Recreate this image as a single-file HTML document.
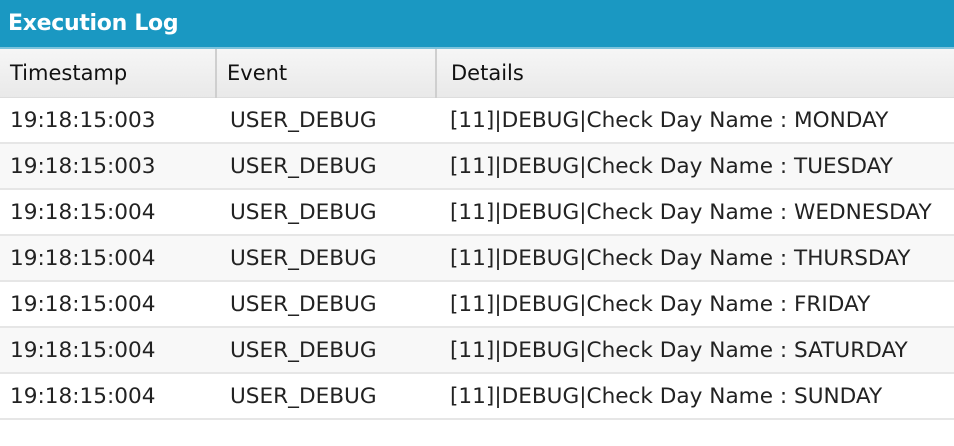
<!DOCTYPE html>
<html><head><style>
body{margin:0;width:954px;height:446px;background:#fff;font-family:"DejaVu Sans","Liberation Sans",sans-serif;overflow:hidden}
.title{height:47px;background:#1a98c2;color:#fff;font-weight:bold;font-size:22px;line-height:47px;padding-left:8px;border-bottom:2px solid #7cc3dc;letter-spacing:-0.3px}
table{border-collapse:collapse;width:954px;table-layout:fixed}
th{height:48px;background:linear-gradient(#f6f6f6,#e9e9e9);font-weight:normal;text-align:left;font-size:21px;color:#111;padding:0 0 0 10px;border-right:2px solid #cfcfcf;border-bottom:1px solid #ddd}
th:last-child{border-right:none;padding-left:14px}
td{height:44px;font-size:21.6px;color:#222;padding:0 0 0 10px;border-bottom:2px solid #e6e6e6;white-space:nowrap;overflow:visible}
td:nth-child(2){padding-left:14px}
td:nth-child(3){padding-left:14px}
tr.a td{background:#f8f8f8}
</style></head><body>
<div class="title">Execution Log</div>
<table>
<colgroup><col style="width:216px"><col style="width:220px"><col></colgroup>
<tr><th>Timestamp</th><th>Event</th><th>Details</th></tr>
<tr><td>19:18:15:003</td><td>USER_DEBUG</td><td>[11]|DEBUG|Check Day Name : MONDAY</td></tr>
<tr class="a"><td>19:18:15:003</td><td>USER_DEBUG</td><td>[11]|DEBUG|Check Day Name : TUESDAY</td></tr>
<tr><td>19:18:15:004</td><td>USER_DEBUG</td><td>[11]|DEBUG|Check Day Name : WEDNESDAY</td></tr>
<tr class="a"><td>19:18:15:004</td><td>USER_DEBUG</td><td>[11]|DEBUG|Check Day Name : THURSDAY</td></tr>
<tr><td>19:18:15:004</td><td>USER_DEBUG</td><td>[11]|DEBUG|Check Day Name : FRIDAY</td></tr>
<tr class="a"><td>19:18:15:004</td><td>USER_DEBUG</td><td>[11]|DEBUG|Check Day Name : SATURDAY</td></tr>
<tr><td>19:18:15:004</td><td>USER_DEBUG</td><td>[11]|DEBUG|Check Day Name : SUNDAY</td></tr>
</table>
</body></html>
